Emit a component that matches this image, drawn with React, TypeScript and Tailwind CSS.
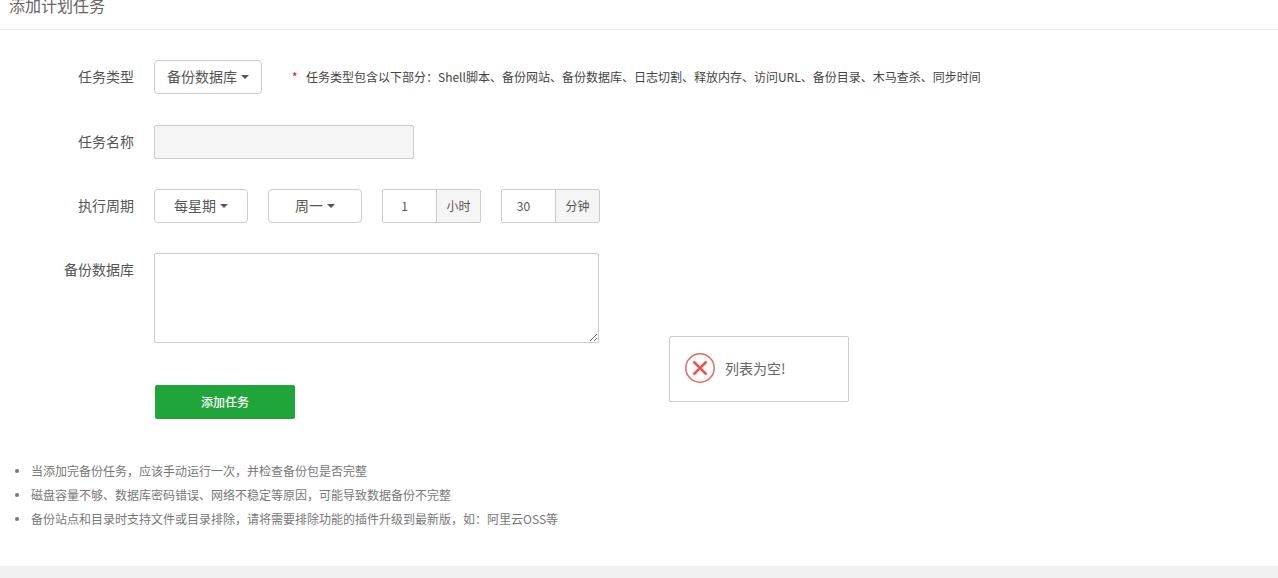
const fontStack = '"Noto Sans CJK SC", "Liberation Sans", sans-serif';

const Caret = () => (
  <span className="ml-[4px] inline-block border-x-[4px] border-t-[4px] border-x-transparent border-t-[#555]" />
);

function Select({ label, className }: { label: string; className: string }) {
  return (
    <div
      className={`flex h-[34px] items-center justify-center rounded-[4px] border border-[#ccc] bg-white text-[14px] text-[#555] ${className}`}
    >
      <span className="mb-[2px]">{label}</span>
      <Caret />
    </div>
  );
}

function Addon({ value, unit, className }: { value: string; unit: string; className: string }) {
  return (
    <div className={`flex h-[34px] rounded-[2px] border border-[#ccc] text-[12px] text-[#555] ${className}`}>
      <div className="flex w-[53px] items-center justify-center bg-white pr-[10px]">{value}</div>
      <div className="flex flex-1 items-center justify-center border-l border-[#ccc] bg-[#f5f5f5]">{unit}</div>
    </div>
  );
}

function Row({ label, children, className }: { label: string; children: React.ReactNode; className?: string }) {
  return (
    <div className={`flex ${className ?? ""}`}>
      <div className="mr-5 flex h-[34px] w-[134px] shrink-0 items-center justify-end pb-[2px] text-[14px] text-[#555]">
        {label}
      </div>
      {children}
    </div>
  );
}

const tips = [
  "当添加完备份任务，应该手动运行一次，并检查备份包是否完整",
  "磁盘容量不够、数据库密码错误、网络不稳定等原因，可能导致数据备份不完整",
  "备份站点和目录时支持文件或目录排除，请将需要排除功能的插件升级到最新版，如：阿里云OSS等",
];

export default function App() {
  return (
    <div className="relative h-[578px] overflow-hidden bg-white" style={{ fontFamily: fontStack }}>
      {/* the title is scrolled partly out of view in the screenshot */}
      <div className="h-[30px] border-b border-[#ececec] pl-[9px] text-[16px] leading-[10px] text-[#666]">
        添加计划任务
      </div>

      <div className="pt-[30px]">
        <Row label="任务类型">
          <Select label="备份数据库" className="w-[108px]" />
          <div className="ml-[30px] flex h-[34px] items-center text-[12px] text-[#444]">
            <span className="mr-[8px] w-[6px] text-[#ef0808]">*</span>
            任务类型包含以下部分：Shell脚本、备份网站、备份数据库、日志切割、释放内存、访问URL、备份目录、木马查杀、同步时间
          </div>
        </Row>

        <Row label="任务名称" className="mt-[31px]">
          <div className="h-[34px] w-[260px] rounded-[2px] border border-[#ccc] bg-[#f5f5f5]" />
        </Row>

        <Row label="执行周期" className="mt-[30px]">
          <Select label="每星期" className="w-[94px]" />
          <Select label="周一" className="ml-5 w-[94px]" />
          <Addon value="1" unit="小时" className="ml-5 w-[99px]" />
          <Addon value="30" unit="分钟" className="ml-5 w-[99px]" />
        </Row>

        <Row label="备份数据库" className="mt-[30px]">
          <textarea className="block h-[90px] w-[445px] rounded-[2px] border border-[#ccc] bg-white" />
        </Row>

        <div className="mt-[42px] pl-[155px]">
          <button className="h-[34px] w-[140px] rounded-[2px] bg-[#20a53a] text-[12px] font-medium text-white">
            添加任务
          </button>
        </div>

        <ul className="mt-[40px] list-none pl-[15px]">
          {tips.map((tip) => (
            <li key={tip} className="flex h-6 items-center text-[12px] text-[#777]">
              <span className="mr-[12px] h-[4px] w-[4px] rounded-full bg-[#777]" />
              {tip}
            </li>
          ))}
        </ul>
      </div>

      <div className="mt-[35px] h-3 bg-[#f1f1f1]" />

      {/* toast message, sits over the form */}
      <div className="absolute left-[669px] top-[336px] flex h-[66px] w-[180px] items-center rounded-[2px] border border-[#ccc] bg-white pl-[15px] text-[14px] text-[#666]">
        <svg width="30" height="30" viewBox="0 0 30 30" fill="none" className="mb-[2px] mr-[10px]">
          <circle cx="15" cy="15" r="14.2" stroke="#e8675f" strokeWidth="1.5" />
          <path d="M8.5 8.5 L21.5 21.5 M21.5 8.5 L8.5 21.5" stroke="#e8574f" strokeWidth="2.6" />
        </svg>
        <span className="mb-[2px]">列表为空!</span>
      </div>
    </div>
  );
}
